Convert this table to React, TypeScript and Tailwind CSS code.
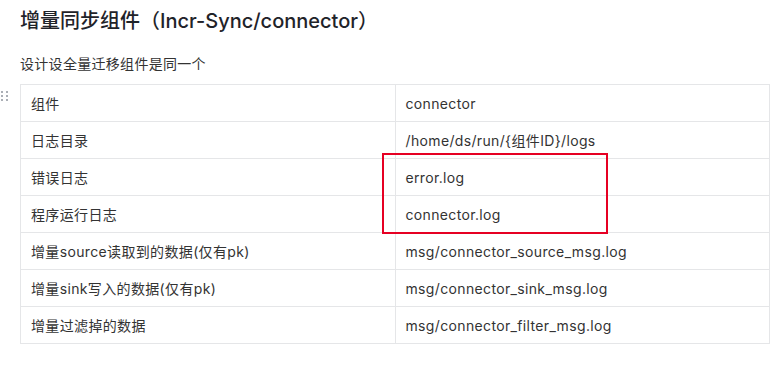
import React from "react";

const ROWS: [string, string][] = [
  ["组件", "connector"],
  ["日志目录", "/home/ds/run/{组件ID}/logs"],
  ["错误日志", "error.log"],
  ["程序运行日志", "connector.log"],
  ["增量source读取到的数据(仅有pk)", "msg/connector_source_msg.log"],
  ["增量sink写入的数据(仅有pk)", "msg/connector_sink_msg.log"],
  ["增量过滤掉的数据", "msg/connector_filter_msg.log"],
];

const FONT = {
  fontFamily: 'Inter, "Noto Sans CJK SC", sans-serif',
};

function DragHandle() {
  return (
    <div className="grid grid-cols-2 gap-x-[3px] gap-y-[2px]">
      {[0, 1, 2, 3, 4, 5].map((i) => (
        <span key={i} className="block h-[2px] w-[2px] rounded-full bg-[#8f959e]" />
      ))}
    </div>
  );
}

export default function App() {
  return (
    <div className="relative h-[380px] w-[772px] overflow-hidden bg-white" style={FONT}>
      <div className="pl-5 pt-[9px]">
        <h2 className="h-[24px] text-[20px] font-medium leading-[24px] text-[#1f2329]">
          增量同步组件（Incr-Sync/connector）
        </h2>
        <p className="mt-[20px] text-[14px] leading-[22px] tracking-[0.3px] text-[#333]">设计设全量迁移组件是同一个</p>
      </div>

      <div className="relative ml-5 mt-[9px] w-[750px]">
        <div className="absolute left-[-19px] top-[7px]">
          <DragHandle />
        </div>
        <table className="w-full table-fixed border-collapse text-[14px] tracking-[0.35px] text-[#333]">
          <tbody>
            {ROWS.map(([k, v]) => (
              <tr key={k} className="h-[37px]">
                <td className="border border-[#e5e6e8] px-[10px] py-0 align-middle">{k}</td>
                <td className="border border-[#e5e6e8] px-[10px] py-0 align-middle">{v}</td>
              </tr>
            ))}
          </tbody>
        </table>
      </div>

      <div className="absolute left-[382px] top-[153px] h-[81px] w-[226px] border-2 border-[#e60023]" />
    </div>
  );
}
